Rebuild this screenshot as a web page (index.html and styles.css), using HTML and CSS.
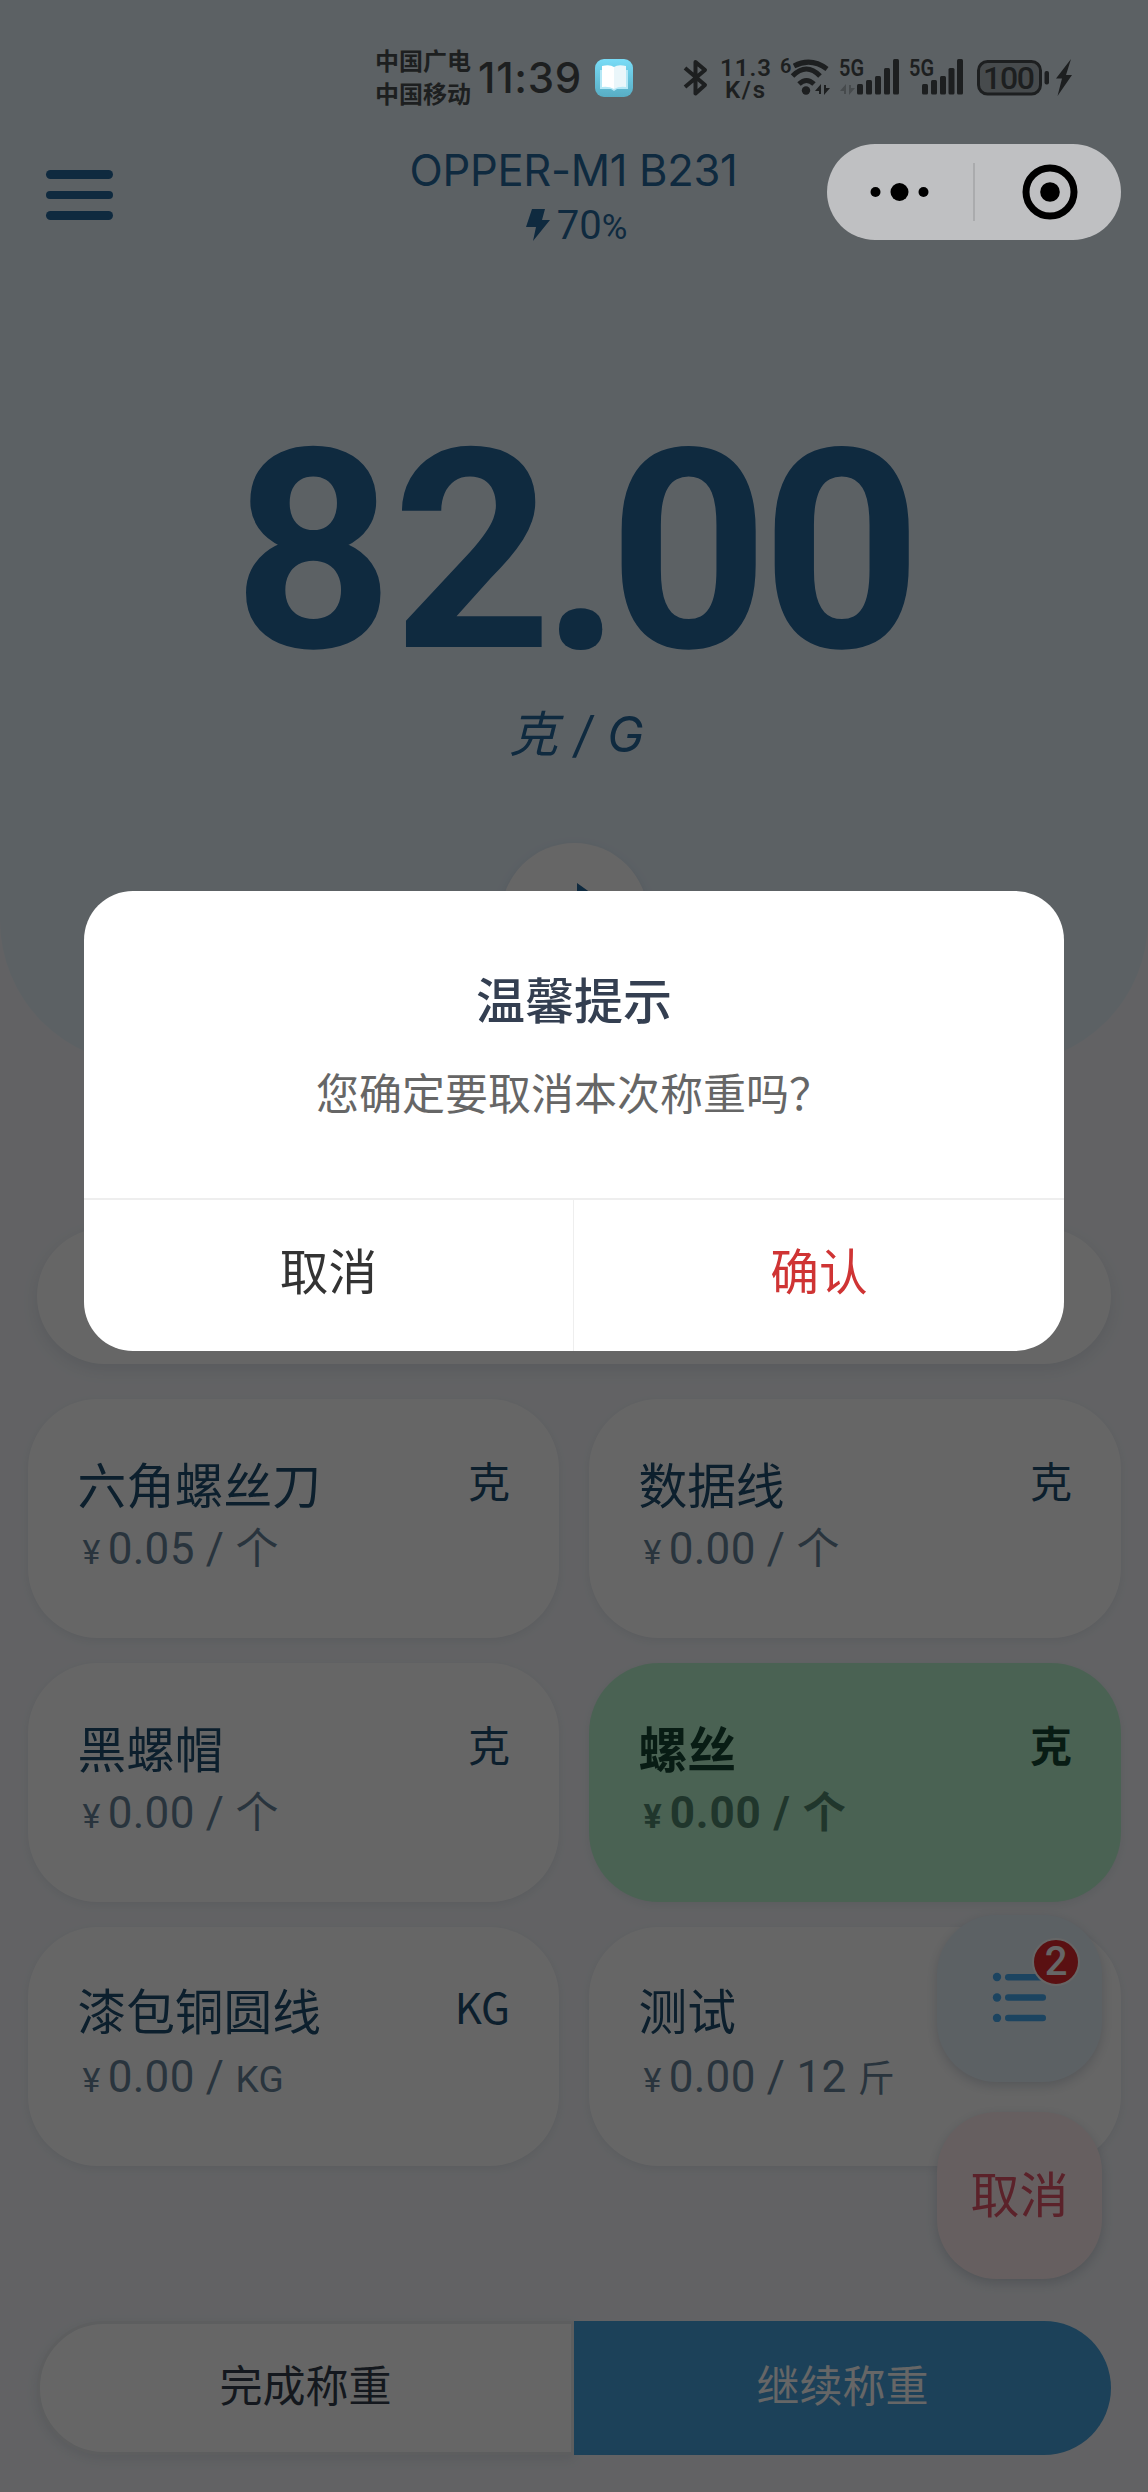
FILE: index.html
```html
<!DOCTYPE html>
<html lang="zh-CN">
<head>
<meta charset="utf-8">
<title>OPPER-M1 B231</title>
<link rel="stylesheet" href="styles.css">
</head>
<body>
<div class="page">
  <header class="hero">
    <div class="nav">
      <div class="menu"><i></i><i></i><i></i></div>
      <div class="device">
        <div class="device-name">OPPER-M1 B231</div>
        <div class="device-power">
          <svg width="24" height="34" viewBox="0 0 24 34"><path d="M6 1h13l-3 11h8L7 33l3-14H0z" fill="#26699e"/></svg>
          <span>70<small>%</small></span>
        </div>
      </div>
    </div>
    <div class="reading"><span class="lead">8</span>2<span class="dot">.</span>00</div>
    <div class="unit">克 / G</div>
    <div class="swap">
      <svg width="60" height="66" viewBox="0 0 60 66"><path d="M33 0l14 10-14 10v-6C20 15 14 26 14 36H6c0-16 8-28 27-28z" fill="#26699e"/></svg>
    </div>
  </header>
  <div class="search"></div>
  <main class="goods">
    <section class="card"><div class="row"><h3>六角螺丝刀</h3><span class="u">克</span></div><p><small>¥</small>0.05 / <b>个</b></p></section>
    <section class="card"><div class="row"><h3>数据线</h3><span class="u">克</span></div><p><small>¥</small>0.00 / <b>个</b></p></section>
    <section class="card"><div class="row"><h3>黑螺帽</h3><span class="u">克</span></div><p><small>¥</small>0.00 / <b>个</b></p></section>
    <section class="card active"><div class="row"><h3>螺丝</h3><span class="u">克</span></div><p><small>¥</small>0.00 / <b>个</b></p></section>
    <section class="card compact"><div class="row"><h3>漆包铜圆线</h3><span class="u">KG</span></div><p><small>¥</small>0.00 / <em>KG</em></p></section>
    <section class="card compact"><div class="row"><h3>测试</h3></div><p><small>¥</small>0.00 / 12 <em>斤</em></p></section>
  </main>
  <footer class="actions"><div class="finish">完成称重</div><div class="continue">继续称重</div></footer>
  <aside class="floats">
    <div class="float list">
      <svg width="56" height="50" viewBox="0 0 56 50" fill="#46aaf0"><circle cx="5" cy="5" r="4.200"/><circle cx="5" cy="25.500" r="4.200"/><circle cx="5" cy="46" r="4.200"/><rect x="13" y="2" width="41" height="6.400" rx="3.200"/><rect x="13" y="22.300" width="41" height="6.400" rx="3.200"/><rect x="13" y="42.800" width="41" height="6.400" rx="3.200"/></svg>
      <span class="badge">2</span>
    </div>
    <div class="float cancel"><span>取消</span></div>
  </aside>
</div>
<div class="overlay">
  <div class="modal">
    <div class="modal-body"><h2>温馨提示</h2><p>您确定要取消本次称重吗？</p></div>
    <div class="modal-actions"><div>取消</div><div class="ok">确认</div></div>
  </div>
</div>
<div class="status">
  <div class="carrier"><div>中国广电</div><div>中国移动</div></div>
  <div class="time">11:39</div>
  <svg class="book" width="38" height="38" viewBox="0 0 38 38"><defs><linearGradient id="g" x1="0" y1="0" x2="0" y2="1"><stop offset="0" stop-color="#79dcf7"/><stop offset="1" stop-color="#58adc4"/></linearGradient></defs><rect width="38" height="38" rx="9" fill="url(#g)"/><path d="M5 11h28v19H22l-3 2-3-2H5z" fill="#b5e8f6"/><path d="M7 7q8-2 12 1v22q-5-3-12-2z" fill="#fff"/><path d="M31 7q-8-2-12 1v22q5-3 12-2z" fill="#eaf6fa"/></svg>
  <svg class="icons" width="400" height="50" viewBox="680 50 400 50" fill="#1d1f20">
    <path d="M685 68l20 17-9.500 8.500v-31.500l9.500 8-20 17" fill="none" stroke="#1d1f20" stroke-width="4" stroke-linejoin="round"/>
    <g font-family="Roboto, sans-serif" font-weight="600">
      <text x="720" y="76" font-size="24" textLength="51">11.3</text>
      <text x="725" y="97.500" font-size="24" textLength="40">K/s</text>
      <text x="780" y="73" font-size="20">6</text>
      <text x="839" y="76" font-size="23" textLength="25" lengthAdjust="spacingAndGlyphs">5G</text>
      <text x="909" y="76" font-size="23" textLength="25" lengthAdjust="spacingAndGlyphs">5G</text>
    </g>
    <g fill="none" stroke="#1d1f20" stroke-width="5"><path d="M794 66q17-9 33 3"/><path d="M792.500 76q14-14 27.500 0"/><path d="M799 84q7.500-7 15 0"/></g>
    <circle cx="806" cy="90.500" r="4.200"/>
    <path d="M815 91l6-7v10h-2v-3zM830 88l-6 7V85h2v3z"/>
    <path d="M840 91l6-7v10h-2v-3zM855 88l-6 7V85h2v3z" fill="#474b4d"/>
    <g><rect x="857" y="84" width="6" height="10.500" rx="1.500"/><rect x="866" y="80" width="6" height="14.500" rx="1.500"/><rect x="875" y="76" width="6" height="18.500" rx="1.500"/><rect x="884" y="68" width="6" height="26.500" rx="1.500"/><rect x="893" y="59" width="6" height="35.500" rx="1.500"/></g>
    <g><rect x="922" y="84" width="6" height="10.500" rx="1.500"/><rect x="931" y="80" width="6" height="14.500" rx="1.500"/><rect x="940" y="76" width="6" height="18.500" rx="1.500"/><rect x="948.500" y="68" width="6" height="26.500" rx="1.500"/><rect x="957" y="59" width="6" height="35.500" rx="1.500"/></g>
    <rect x="978.500" y="61.500" width="62" height="32.500" rx="9" fill="#474b4d" stroke="#1d1f20" stroke-width="3"/>
    <text x="983" y="89" font-family="Roboto, sans-serif" font-weight="500" font-size="32" textLength="52">100</text>
    <rect x="1044.500" y="71" width="4.500" height="13.500" rx="2"/>
    <path d="M1071 59l-15 19.500h6l-4.500 17.500L1072 75h-6z"/>
  </svg>
</div>
<div class="capsule">
  <svg width="294" height="96" viewBox="0 0 294 96"><circle cx="48.500" cy="48" r="5"/><circle cx="72.500" cy="48" r="9"/><circle cx="96.500" cy="48" r="5"/><path d="M147 19v58" stroke="#a3a4a6" stroke-width="1.500"/><circle cx="223" cy="48" r="24" fill="none" stroke="#000" stroke-width="7"/><circle cx="223" cy="48" r="9.800"/></svg>
</div>
</body>
</html>
```
FILE: styles.css
```css
* { box-sizing: border-box; margin: 0; padding: 0; }
body {
  width: 1148px; height: 2492px; overflow: hidden; position: relative;
  font-family: "Noto Sans CJK SC", sans-serif; font-weight: 400;
}
h2, h3 { font-weight: 400; }
.page {
  width: 1148px; height: 2492px; position: relative;
  background: #f4f6fa; display: flex; flex-direction: column;
}
.hero {
  height: 1064px; flex: none; background: #e6f2fb; border-radius: 0 0 144px 144px;
  display: flex; flex-direction: column; align-items: center; color: #26699e;
}
.nav { width: 100%; height: 260px; padding-top: 144px; display: grid; grid-template-columns: 1fr auto 1fr; }
.menu { padding: 26px 0 0 46px; display: flex; flex-direction: column; gap: 12px; }
.menu i { width: 67px; height: 8.7px; border-radius: 5px; background: #26699e; }
.device { display: flex; flex-direction: column; align-items: center; font-family: Inter, sans-serif; }
.device-name { font-size: 43.5px; line-height: 52px; letter-spacing: -0.3px; white-space: nowrap; margin-left: -1px; }
.device-power { display: flex; align-items: center; gap: 7px; height: 58px; padding-left: 5px; font-family: Roboto, sans-serif; font-size: 40px; }
.device-power small { font-size: 35px; }
.reading { height: 410px; padding-top: 177px; font: 700 279px/230px Roboto, sans-serif; letter-spacing: -7px; white-space: nowrap; }
.lead { margin-right: 6px; }
.dot { font-family: "Noto Sans", sans-serif; font-size: 250px; line-height: 1px; }
.unit { height: 173px; padding: 30px 0 0 5px; font-style: italic; font-size: 49px; line-height: 70px; word-spacing: 2px; font-family: Inter, "Noto Sans CJK SC", sans-serif; }
.swap {
  width: 147px; height: 147px; flex: none; border-radius: 50%; background: #fff;
  box-shadow: 0 4px 12px rgba(40, 80, 120, .12); display: flex; justify-content: center; padding-top: 40px;
}
.search {
  margin: 164px 37px 0; height: 136px; flex: none; border-radius: 68px; background: #fff;
  box-shadow: 0 6px 16px rgba(40, 60, 90, .1);
}
.goods { margin: 34.5px 27px 0 28px; display: grid; grid-template-columns: 531px 532px; column-gap: 30px; row-gap: 25px; }
.card {
  height: 239px; border-radius: 70px; background: #fff; padding: 48px 49px 0 49.5px; color: #1e4e70;
  box-shadow: 0 3px 9px rgba(40, 60, 90, .08);
}
.row { display: flex; justify-content: space-between; height: 75px; }
.card h3 { font-size: 48.7px; line-height: 72px; }
.card .u { font-size: 42px; line-height: 66px; }
.compact { padding-top: 46px; }
.compact .row { height: 77px; }
.compact .u { line-height: 66px; }
.card p { display: flex; align-items: baseline; padding-left: 5px; color: #66839a; font: 44px/54px Roboto, "Noto Sans CJK SC", sans-serif; letter-spacing: .3px; white-space: pre; }
.card p small { font-size: 34px; margin-right: 7px; }
.card p b { font-weight: inherit; font-size: 43px; }
.card p em { font-style: normal; font-size: 37px; }
.active { background: #baf4d0; color: #144632; font-weight: 700; }
.active h3 { font-weight: 700; }
.card.active p { color: #50876e; font-weight: 700; letter-spacing: .9px; }
.actions { margin: 155px 37px 0; height: 134px; flex: none; display: flex; font-size: 43px; line-height: 119px; text-align: center; }
.finish {
  width: 537px; border: 3px solid #e8ebee; border-radius: 67px 0 0 67px; background: #fff; color: #323e4b;
  box-shadow: 0 4px 12px rgba(40, 60, 90, .1);
}
.continue { width: 537px; border-radius: 0 67px 67px 0; background: #46a2de; color: #fff; line-height: 125px; }
.floats { position: absolute; left: 937px; top: 1915px; display: flex; flex-direction: column; gap: 30px; }
.float {
  width: 165px; height: 167px; border-radius: 60px; display: flex; align-items: center; justify-content: center;
  box-shadow: 0 4px 12px rgba(40, 60, 90, .2); position: relative;
}
.list { background: #e6f2fb; padding-bottom: 4px; }
.badge {
  position: absolute; left: 95px; top: 23px; width: 48px; height: 48px; border-radius: 50%;
  background: #e12a2d; border: 2px solid #fff; color: #fff; font: 500 40px/43px Roboto, sans-serif; text-align: center;
}
.cancel { background: #ffeef0; color: #e4556a; font-size: 49px; padding-bottom: 8px; }
.overlay { position: absolute; inset: 0; background: rgba(0, 0, 0, .6); padding: 891px 84px 0; }
.modal { height: 460px; border-radius: 49px; background: #fff; overflow: hidden; display: flex; flex-direction: column; }
.modal-body { height: 307px; padding-top: 72px; text-align: center; }
.modal h2 { font-size: 49px; line-height: 70px; font-weight: 500; color: #343f51; }
.modal p { font-size: 43px; line-height: 64px; margin-top: 26px; color: #666; }
.modal-actions { height: 153px; display: flex; border-top: 2px solid #eee; text-align: center; font-size: 48.7px; line-height: 138px; color: #333; }
.modal-actions div { width: 489px; }
.modal-actions .ok { width: 491px; color: #cf3434; border-left: 1.5px solid #eee; }
.status { position: absolute; left: 375px; top: 43px; height: 67px; display: flex; color: #1d1f20; }
.carrier { width: 103px; font-size: 24px; line-height: 33px; font-weight: 700; white-space: nowrap; }
.time { width: 117px; font: 500 42px/69px Inter, sans-serif; letter-spacing: .7px; white-space: nowrap; }
.book { margin-top: 16px; }
.icons { margin: 7px 0 0 47px; }
.capsule { position: absolute; left: 827px; top: 144px; width: 294px; height: 96px; border-radius: 48px; background: #bfc0c2; }
```
